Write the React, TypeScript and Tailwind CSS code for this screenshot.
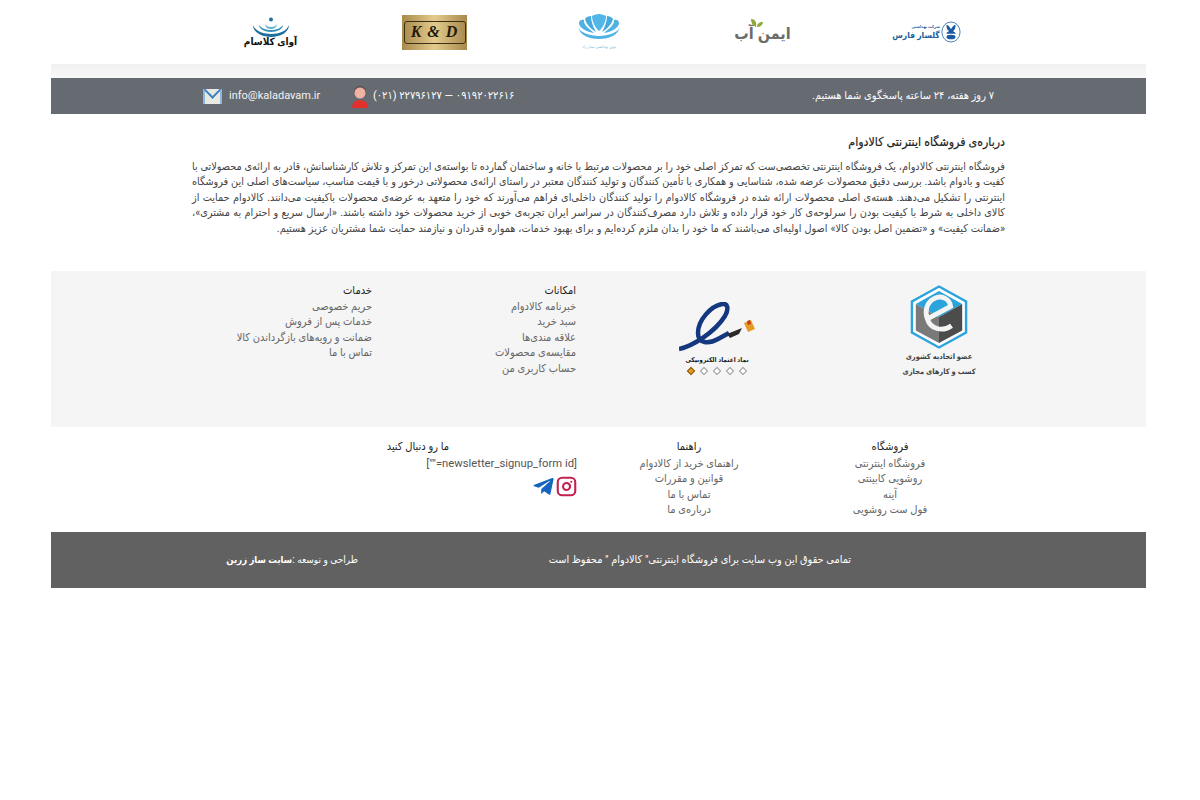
import { Instagram } from "lucide-react"
import { FaTelegramPlane } from "react-icons/fa"

const aboutLines = [
  "فروشگاه اینترنتی کالادوام، یک فروشگاه اینترنتی تخصصی‌ست که تمرکز اصلی خود را بر محصولات مرتبط با خانه و ساختمان گمارده تا بواسته‌ی این تمرکز و تلاش کارشناسانش، قادر به ارائه‌ی محصولاتی با",
  "کفیت و بادوام باشد. بررسی دقیق محصولات عرضه شده، شناسایی و همکاری با تأمین کنندگان و تولید کنندگان معتبر در راستای ارائه‌ی محصولاتی درخور و با قیمت مناسب، سیاست‌های اصلی این فروشگاه",
  "اینترنتی را تشکیل می‌دهند. هسته‌ی اصلی محصولات ارائه شده در فروشگاه کالادوام را تولید کنندگان داخلی‌ای فراهم می‌آورند که خود را متعهد به عرضه‌ی محصولات باکیفیت می‌دانند. کالادوام حمایت از",
  "کالای داخلی به شرط با کیفیت بودن را سرلوحه‌ی کار خود قرار داده و تلاش دارد مصرف‌کنندگان در سراسر ایران تجربه‌ی خوبی از خرید محصولات خود داشته باشند. «ارسال سریع و احترام به مشتری»،",
]
const aboutLast =
  "«ضمانت کیفیت» و «تضمین اصل بودن کالا» اصول اولیه‌ای می‌باشند که ما خود را بدان ملزم کرده‌ایم و برای بهبود خدمات، همواره قدردان و نیازمند حمایت شما مشتریان عزیز هستیم."

const features = ["خبرنامه کالادوام", "سبد خرید", "علاقه مندی‌ها", "مقایسه‌ی محصولات", "حساب کاربری من"]
const services = ["حریم خصوصی", "خدمات پس از فروش", "ضمانت و رویه‌های بازگرداندن کالا", "تماس با ما"]
const shop = ["فروشگاه اینترنتی", "روشویی کابینتی", "آینه", "فول ست روشویی"]
const guide = ["راهنمای خرید از کالادوام", "قوانین و مقررات", "تماس با ما", "درباره‌ی ما"]

function GolsarLogo() {
  return (
    <div className="flex items-center gap-[1px]" dir="ltr">
      <div className="flex flex-col items-end leading-none text-[#1c5f9e] font-bold">
        <span className="text-[4px]">شرکت بهداشتی</span>
        <span className="text-[8.5px] mt-[2px]">گلسار فارس</span>
      </div>
      <svg width="20" height="24" viewBox="0 0 22 24">
        <ellipse cx="11" cy="12" rx="10" ry="11" fill="#fff" stroke="#3b74ad" strokeWidth="1" />
        <path d="M6 4c3 1 4 3 5 5 1-2 2-4 5-5 0 4-1 6-3 7 2 1 3 2 3 3H6c0-1 1-2 3-3-2-1-3-3-3-7z" fill="#1c5aa0" />
        <ellipse cx="11" cy="17.500" rx="5" ry="2.500" fill="#1c5aa0" />
      </svg>
    </div>
  )
}

function ImenAbLogo() {
  return (
    <div className="relative w-[60px] h-[24px] flex items-end justify-center">
      <span className="text-[16px] leading-[20px] font-bold text-[#6b6d68] whitespace-nowrap">ایمن آب</span>
      <svg className="absolute left-[18px] -top-[2px]" width="12" height="10" viewBox="0 0 12 10">
        <path d="M5 9C2 8 0 5 0 1c4 0 6 3 5 8zM6 9c0-3 2-5 6-5 0 3-3 5-6 5z" fill="#8fa83a" />
      </svg>
    </div>
  )
}

function ShellLogo() {
  return (
    <svg width="44" height="36" viewBox="0 0 44 36">
      <path d="M22 22c-9 0-20-4-21-9 2 8 10 12 21 12s19-4 21-12c-1 5-12 9-21 9z" fill="#4fb2e3" />
      <path d="M2 9c0-3 3-4 5-3-1 5 6 9 10 13C10 18 2 14 2 9zM42 9c0-3-3-4-5-3 1 5-6 9-10 13 7-1 15-5 15-10z" fill="#4fb2e3" />
      <path d="M8 5c1-2 4-3 6-3 0 5 2 11 5 16C14 15 9 10 8 5zM36 5c-1-2-4-3-6-3 0 5-2 11-5 16 5-3 10-8 11-13z" fill="#45aadd" />
      <path d="M15 2c2-1 4-2 7-2s5 1 7 2c0 5-3 12-7 15-4-3-7-10-7-15z" fill="#52b6e8" />
      <text x="22" y="34" textAnchor="middle" fontSize="4" fill="#7fb6d6" direction="rtl">نوین بهداشتی میناز راد</text>
    </svg>
  )
}

function KdLogo() {
  return (
    <div className="w-[65px] h-[35px] bg-gradient-to-r from-[#a88a4a] via-[#e3cb8e] to-[#a8894c] flex items-center justify-center" dir="ltr">
      <div className="w-[62px] h-[23px] rounded-[3px] border border-[#3d2f14] flex items-center justify-center font-['Liberation_Serif',serif] italic font-semibold text-[16px] text-[#231a0a] tracking-[1px]">
        K &amp; D
      </div>
    </div>
  )
}

function AbLogo() {
  return (
    <div className="flex flex-col items-center">
      <svg width="38" height="21" viewBox="0 0 38 21">
        <circle cx="19" cy="2.500" r="2" fill="#1f6f9d" />
        <path d="M1 8c2 6 10 9 18 9s16-3 18-9c0 7-8 12-18 12S1 15 1 8z" fill="#1f6f9d" />
        <path d="M7 8c2 3 7 5 12 5s10-2 12-5c0 4-6 7-12 7S7 12 7 8z" fill="#2f8fb8" />
        <path d="M13 7c1 2 3 3 6 3s5-1 6-3c0 3-3 5-6 5s-6-2-6-5z" fill="#63b4cf" />
      </svg>
      <span className="text-[10px] leading-[10px] font-bold text-[#111] whitespace-nowrap -mt-[1px]">آوای کلاسام</span>
    </div>
  )
}

function HexBadge() {
  return (
    <svg width="58" height="64" viewBox="0 0 60 66">
      <path d="M30 1.500 58 17v32L30 64.500 2 49V17z" fill="#fff" stroke="#2ba3dc" strokeWidth="2.500" />
      <path d="M30 6 54 19.500 30 33 6 19.500z" fill="#2ba3dc" />
      <path d="M6 19.500 30 33v27L6 47z" fill="#7a7a7a" />
      <path d="M54 19.500 30 33v27l24-13z" fill="#4c4c4c" />
      <path d="M18 35 42 22C41 14 32 10 25 14 17 18 15 27 18 35 21 45 33 49 43 42" fill="none" stroke="#f4f4f4" strokeWidth="5" />
    </svg>
  )
}

function EnamadBadge() {
  return (
    <svg width="76" height="50" viewBox="0 0 76 50">
      <path d="M0 47C14 44 36 30 46 14 50 7 49 1 43 2 32 4 19 18 19 31 19 42 30 42 39 37L50 31" fill="none" stroke="#14387f" strokeWidth="4.500" />
      <path d="M48 32l15-6-3 6-9 4z" fill="#2a2a2a" />
      <path d="M65 21l7-3 4 9-7 3z" fill="#e59a24" />
      <path d="M68 19l3-1 1 4-3 1z" fill="#c43b1e" />
    </svg>
  )
}

function Diamonds() {
  return (
    <div className="flex gap-[7px] justify-center">
      {[0, 1, 2, 3, 4].map((i) => (
        <span
          key={i}
          className={
            i === 4
              ? "w-[6px] h-[6px] rotate-45 bg-[#e59a24] border border-[#8a5a12]"
              : "w-[6px] h-[6px] rotate-45 bg-white border border-[#999]"
          }
        />
      ))}
    </div>
  )
}

function MailIcon() {
  return (
    <svg width="19" height="17" viewBox="0 0 19 17">
      <rect x="0" y="1" width="19" height="15" fill="#e9e9e4" />
      <path d="M0 1h2.500L9.500 8 16.500 1H19L9.500 11z" fill="#3f7fc4" />
      <path d="M0 1v15h2V3zM19 1v15h-2V3z" fill="#8fb6dc" />
    </svg>
  )
}

function AgentIcon() {
  return (
    <svg width="18" height="23" viewBox="0 0 18 23">
      <path d="M3.500 8a5.500 6.500 0 0 1 11 0" fill="none" stroke="#5c4a48" strokeWidth="1.200" />
      <circle cx="9" cy="8" r="5.500" fill="#f2b3a4" />
      <path d="M1 23c0-5 3-8 8-8s8 3 8 8z" fill="#e2312c" />
    </svg>
  )
}

function LinkColumn({
  title,
  items,
  className,
  titleClassName,
}: {
  title: string
  items: string[]
  className: string
  titleClassName: string
}) {
  return (
    <div className={className}>
      <h4 className={`text-[11px] leading-[16px] font-medium text-[#222] ${titleClassName}`}>{title}</h4>
      <ul className="text-[11px] leading-[15.4px] text-[#666]">
        {items.map((item) => (
          <li key={item}>{item}</li>
        ))}
      </ul>
    </div>
  )
}

export default function App() {
  return (
    <div dir="rtl" className="min-h-[800px] bg-white font-['Roboto','DejaVu_Sans_Condensed','DejaVu_Sans',sans-serif]">
      <div className="mr-[54px] w-[1095px] h-[64px] flex justify-center items-center">
        <div className="w-[820px] grid grid-cols-5 justify-items-center items-center">
          <GolsarLogo />
          <ImenAbLogo />
          <ShellLogo />
          <KdLogo />
          <AbLogo />
        </div>
      </div>

      <div className="mr-[54px] w-[1095px]">
        <div className="h-[14px] bg-gradient-to-b from-[#f0f0f0] to-[#f8f8f8]" />
        <div className="h-[36px] bg-[#666a71] flex items-center justify-between px-[152px] text-white text-[11px]">
          <span>۷ روز هفته، ۲۴ ساعته پاسخگوی شما هستیم.</span>
          <div className="flex items-center" dir="ltr">
            <MailIcon />
            <span className="ml-[7px] text-[11px] text-[#f4f4f4] w-[122px]">info@kaladavam.ir</span>
            <AgentIcon />
            <span className="ml-[4px] text-[11px] w-[143px] whitespace-nowrap">(۰۲۱) ۲۲۷۹۶۱۲۷ — ۰۹۱۹۲۰۲۲۶۱۶</span>
          </div>
        </div>

        <div className="h-[157px] px-[141px] pt-[19px]">
          <h3 className="text-[12.3px] leading-[18px] font-medium text-[#222] mb-[8px] [-webkit-text-stroke:0.2px_#222]">
            درباره‌ی فروشگاه اینترنتی کالادوام
          </h3>
          <div className="text-[10.8px] leading-[15.4px] text-[#444]">
            {aboutLines.map((line) => (
              <p key={line} className="text-justify [text-align-last:justify]">
                {line}
              </p>
            ))}
            <p className="[word-spacing:0.3px]">{aboutLast}</p>
          </div>
        </div>

        <div className="h-[156px] bg-[#f5f5f5] flex pr-[106px] pt-[12px]">
          <div className="w-[202px] flex flex-col items-center pt-[2px]">
            <HexBadge />
            <p className="text-[7.5px] font-bold text-[#444] leading-[15px] text-center">
              عضو اتحادیه کشوری
              <br />
              کسب و کارهای مجازی
            </p>
          </div>
          <div className="w-[202px] mr-[20px] flex flex-col items-center pt-[19px]">
            <EnamadBadge />
            <p className="text-[6.5px] font-bold text-[#222] leading-[10px] mt-[3px]">نماد اعتماد الکترونیکی</p>
            <div className="mt-[3px]">
              <Diamonds />
            </div>
          </div>
          <LinkColumn title="امکانات" items={features} className="w-[204px] mr-[40px]" titleClassName="mb-0" />
          <LinkColumn title="خدمات" items={services} className="w-[200px]" titleClassName="mb-0" />
        </div>

        <div className="h-[105px] flex pr-[156px] pt-[12px]">
          <LinkColumn title="فروشگاه" items={shop} className="w-[200px] text-center" titleClassName="mb-[1px]" />
          <LinkColumn title="راهنما" items={guide} className="w-[202px] text-center" titleClassName="mb-[1px]" />
          <div className="w-[200px] mr-[11px]">
            <h4 className="text-[11px] leading-[16px] font-medium text-[#222] mr-[128px] whitespace-nowrap">ما رو دنبال کنید</h4>
            <p className="text-[11.25px] leading-[16px] text-[#555] mt-[1px]" dir="rtl">
              [newsletter_signup_form id=""]
            </p>
            <div className="flex items-center gap-[1px] mt-[3px]">
              <Instagram className="w-[21px] h-[21px] text-[#c2224f]" strokeWidth={2.4} />
              <FaTelegramPlane className="w-[23px] h-[23px] text-[#1565c0]" />
            </div>
          </div>
        </div>

        <div className="h-[56px] bg-[#616161] text-white text-[10.85px] flex items-center pr-[295px]">
          <span className="w-[493px]">تمامی حقوق این وب سایت برای فروشگاه اینترنتی" کالادوام " محفوظ است</span>
          <span className="text-[10px] whitespace-nowrap">
            طراحی و توسعه :<span className="font-bold text-[9.5px]">سایت ساز زرین</span>
          </span>
        </div>
      </div>
    </div>
  )
}
